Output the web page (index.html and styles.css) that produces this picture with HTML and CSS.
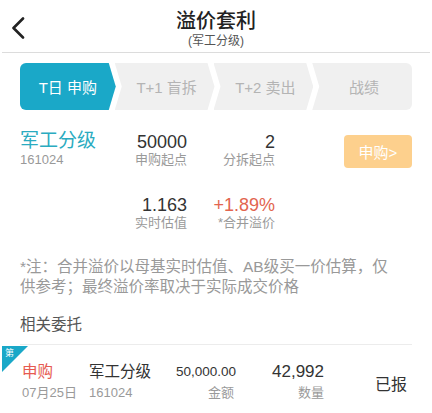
FILE: index.html
```html
<!DOCTYPE html>
<html lang="zh-CN">
<head>
    <meta charset="UTF-8">
    <meta name="viewport" content="width=device-width, initial-scale=1.0">
    <title>溢价套利</title>
    <link rel="stylesheet" href="styles.css">
</head>
<body>
    <header class="topbar">
        <a class="back" href="#">
            <svg width="14" height="22" viewBox="0 0 14 22">
                <polyline points="12,1.5 2.5,11 12,20.5" fill="none" stroke="#222" stroke-width="2.6" stroke-linecap="round" stroke-linejoin="round"/>
            </svg>
        </a>
        <div class="title">
            <h1>溢价套利</h1>
            <p>(军工分级)</p>
        </div>
        <div class="spacer"></div>
    </header>

    <!-- steps -->
    <div class="steps">
        <div class="step first active">T日 申购</div>
        <div class="step">T+1 盲拆</div>
        <div class="step">T+2 卖出</div>
        <div class="step last">战绩</div>
    </div>

    <section class="fund">
        <div class="fund-name">
            <div class="name">军工分级</div>
            <div class="code">161024</div>
        </div>
        <div class="stat">
            <div class="num">50000</div>
            <div class="label">申购起点</div>
        </div>
        <div class="stat">
            <div class="num">2</div>
            <div class="label">分拆起点</div>
        </div>
        <div class="buy"><button>申购&gt;</button></div>

        <div></div>
        <div class="stat row2">
            <div class="num">1.163</div>
            <div class="label">实时估值</div>
        </div>
        <div class="stat row2">
            <div class="num up">+1.89%</div>
            <div class="label">*合并溢价</div>
        </div>
    </section>

    <p class="note">*注：合并溢价以母基实时估值、AB级买一价估算，仅<br>供参考；最终溢价率取决于实际成交价格</p>

    <h2 class="section-title">相关委托</h2>

    <div class="order">
        <span class="badge"><i>第</i></span>
        <div class="cell">
            <div class="main red">申购</div>
            <div class="sub">07月25日</div>
        </div>
        <div class="cell">
            <div class="main">军工分级</div>
            <div class="sub">161024</div>
        </div>
        <div class="cell right">
            <div class="main amount">50,000.00</div>
            <div class="sub">金额</div>
        </div>
        <div class="cell right">
            <div class="main qty">42,992</div>
            <div class="sub">数量</div>
        </div>
        <div class="status">已报</div>
    </div>
</body>
</html>
```

FILE: styles.css
```css
body {
    font-family: "Liberation Sans", "Noto Sans CJK SC", sans-serif;
    background-color: #fff;
    color: #333;
    margin: 0;
    padding: 0;
    width: 432px;
}

.topbar {
    display: flex;
    height: 52px;
    border-bottom: 1px solid #dcdcdc;
    margin: 0 2px;
}

.back {
    width: 46px;
    padding: 17px 0 0 9px;
    box-sizing: border-box;
}

.title {
    flex: 1;
    text-align: center;
    padding-top: 9px;
}

.title h1 {
    margin: 0;
    font-size: 20px;
    line-height: 24px;
    font-weight: 500;
    color: #222;
}

.title p {
    margin: 0;
    font-size: 12px;
    line-height: 16px;
    color: #555;
}

.spacer {
    width: 46px;
}

.steps {
    display: flex;
    height: 47px;
    margin: 10px 20px 0 20px;
    border-radius: 6px;
    overflow: hidden;
}

.step {
    flex: 1;
    margin-left: -1px;
    background-color: #f0f0f0;
    color: #b4b4b4;
    font-size: 15px;
    display: flex;
    align-items: center;
    justify-content: center;
    padding-left: 4px;
    clip-path: polygon(0 0, calc(100% - 7px) 0, 100% 50%, calc(100% - 7px) 100%, 0 100%, 7px 50%);
}

.step.first {
    margin-left: 0;
    padding-left: 0;
    clip-path: polygon(0 0, calc(100% - 7px) 0, 100% 50%, calc(100% - 7px) 100%, 0 100%);
}

.step.last {
    clip-path: polygon(0 0, 100% 0, 100% 100%, 0 100%, 7px 50%);
}

.step.active {
    background-color: #1aa8c8;
    color: #fff;
}

.fund {
    display: grid;
    grid-template-columns: 100px 67px 88px 1fr;
    row-gap: 27px;
    padding: 20px 20px 0 20px;
}

.fund-name .name {
    font-size: 19px;
    line-height: 22px;
    color: #2aabc0;
}

.fund-name .code {
    font-size: 13px;
    line-height: 15px;
    color: #999;
}

.stat {
    text-align: right;
    padding-top: 2px;
}

.stat .num {
    font-size: 18px;
    line-height: 20px;
    color: #333;
}

.stat .num.up {
    color: #e2654f;
}

.stat .label {
    font-size: 13px;
    line-height: 16px;
    color: #9a9a9a;
}

.buy {
    display: flex;
    justify-content: flex-end;
    padding-top: 5px;
}

.buy button {
    width: 68px;
    height: 33px;
    border: none;
    border-radius: 4px;
    background-color: #fdd08d;
    color: #fff;
    font-family: inherit;
    font-size: 15px;
    padding: 0;
}

.stat.row2 {
    padding-top: 0;
}

.note {
    margin: 26px 20px 0 20px;
    font-size: 15.5px;
    line-height: 19.5px;
    color: #999;
}

.section-title {
    margin: 19px 20px 0 20px;
    padding-bottom: 10px;
    font-size: 15.5px;
    line-height: 19px;
    font-weight: normal;
    color: #555;
    border-bottom: 1px solid #ececec;
}

.order {
    position: relative;
    display: grid;
    grid-template-columns: 67px 87px 58px 90px 1fr;
    padding: 18px 21px 13px 22px;
    border-bottom: 1px solid #ececec;
    margin-right: 4px;
}

.badge {
    position: absolute;
    left: 2px;
    top: 1px;
    width: 26px;
    height: 26px;
    background-color: #1aa8c8;
    clip-path: polygon(0 0, 100% 0, 0 100%);
}

.badge i {
    font-style: normal;
    font-size: 9px;
    line-height: 10px;
    color: #fff;
    display: block;
    padding: 2px 0 0 3px;
}

.cell .main {
    font-size: 15.5px;
    line-height: 18px;
    color: #333;
}

.cell .main.red {
    color: #e65a50;
}

.cell .main.amount {
    font-size: 13.5px;
}

.cell .main.qty {
    font-size: 17px;
}

.cell .sub {
    margin-top: 4px;
    font-size: 13px;
    line-height: 16px;
    color: #9a9a9a;
}

.cell.right {
    text-align: right;
}

.status {
    align-self: center;
    text-align: right;
    font-size: 16px;
    color: #333;
    padding-top: 2px;
}
```
